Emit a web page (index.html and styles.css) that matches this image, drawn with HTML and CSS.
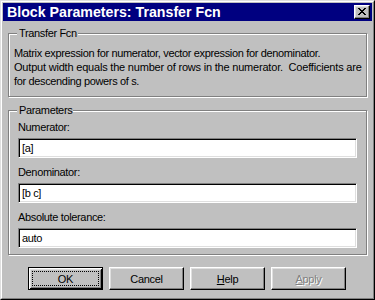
FILE: index.html
```html
<!DOCTYPE html>
<html>
<head>
<meta charset="utf-8">
<link rel="stylesheet" href="styles.css">
</head>
<body>
<div class="window">
  <div class="frame">
    <div class="titlebar">
      <span class="title">Block Parameters: Transfer Fcn</span>
      <button class="close" aria-label="Close">
        <svg width="8" height="7" viewBox="0 0 8 7" shape-rendering="crispEdges">
          <path fill="#000" d="M0 0h2v1H0zM6 0h2v1H6zM1 1h2v1H1zM5 1h2v1H5zM2 2h4v1H2zM3 3h2v1H3zM2 4h4v1H2zM1 5h2v1H1zM5 5h2v1H5zM0 6h2v1H0zM6 6h2v1H6z"/>
        </svg>
      </button>
    </div>
    <div class="body">
      <div class="group desc">
        <span class="legend">Transfer Fcn</span>
        <p class="text">Matrix expression for numerator, vector expression for denominator.
<span class="wide">Output width equals the number of rows in the numerator.  Coefficients are</span>
for descending powers of s.</p>
      </div>
      <div class="group params">
        <span class="legend">Parameters</span>
        <div class="label">Numerator:</div>
        <div class="field">[a]</div>
        <div class="label">Denominator:</div>
        <div class="field">[b c]</div>
        <div class="label">Absolute tolerance:</div>
        <div class="field last">auto</div>
      </div>
    </div>
    <div class="buttons">
      <button class="btn default"><span class="focus">OK</span></button>
      <button class="btn"><span class="cap">Cancel</span></button>
      <button class="btn"><span class="cap"><u>H</u>elp</span></button>
      <button class="btn disabled"><span class="cap"><u>A</u>pply</span></button>
    </div>
  </div>
</div>
</body>
</html>
```

FILE: styles.css
```css
html, body {
  margin: 0;
  padding: 0;
  background: #c0c0c0;
}

body {
  font-family: "Liberation Sans", Arial, sans-serif;
  font-size: 11px;
  letter-spacing: -0.35px;
  color: #000;
}

.window {
  width: 375px;
  height: 300px;
  box-sizing: border-box;
  border: 1px solid;
  border-color: #dfdfdf #000 #000 #dfdfdf;
  background: #c0c0c0;
}

.frame {
  height: 100%;
  box-sizing: border-box;
  border: 1px solid;
  border-color: #fff #808080 #808080 #fff;
  padding: 1px;
  display: flex;
  flex-direction: column;
}

.titlebar {
  height: 18px;
  flex: none;
  background: #000080;
  color: #fff;
  display: flex;
  align-items: flex-start;
  padding: 0 2px 0 4px;
}

.title {
  flex: 1;
  font-weight: bold;
  font-size: 14.2px;
  letter-spacing: 0;
  line-height: 18px;
  white-space: nowrap;
}

.close {
  width: 16px;
  height: 14px;
  margin-top: 2px;
  padding: 0;
  box-sizing: border-box;
  background: #c0c0c0;
  border: 1px solid;
  border-color: #fff #000 #000 #fff;
  box-shadow: inset -1px -1px #808080, inset 1px 1px #dfdfdf;
  display: flex;
  align-items: center;
  justify-content: center;
}

.close svg {
  display: block;
  margin: 0 0 1px 0;
}

.body {
  padding: 0 5px;
  display: flex;
  flex-direction: column;
}

.group {
  position: relative;
  box-sizing: border-box;
  border: 1px solid #808080;
  box-shadow: inset 1px 1px #fff, 1px 1px #fff;
}

.legend {
  position: absolute;
  top: -8px;
  left: 8px;
  padding: 0 1px 0 2px;
  background: #c0c0c0;
  line-height: 14px;
}

.desc {
  margin-top: 12px;
  height: 64px;
  padding: 12px 5px 9px 5px;
}

.text {
  margin: 0;
  line-height: 14px;
  white-space: pre;
}

.text .wide {
  letter-spacing: -0.2px;
}

.params {
  margin-top: 13px;
  padding: 9px 9px 6px 9px;
}

.label {
  line-height: 14px;
  margin-bottom: 4px;
}

.field {
  height: 20px;
  box-sizing: border-box;
  margin-bottom: 7px;
  border: 1px solid;
  border-color: #808080 #fff #fff #808080;
  box-shadow: inset 1px 1px #000, inset -1px -1px #dfdfdf;
  background: #fff;
  padding: 0 3px;
  line-height: 18px;
  white-space: pre;
}

.field.last {
  margin-bottom: 0;
}

.buttons {
  margin-top: 12px;
  display: flex;
  justify-content: center;
  gap: 6px;
  padding-right: 1px;
}

.btn {
  width: 75px;
  height: 23px;
  box-sizing: border-box;
  padding: 0;
  margin: 0;
  background: #c0c0c0;
  border: 1px solid;
  border-color: #fff #000 #000 #fff;
  box-shadow: inset -1px -1px #808080, inset 1px 1px #dfdfdf;
  font-family: inherit;
  font-size: 11px;
  letter-spacing: -0.3px;
  color: #000;
  display: flex;
  align-items: stretch;
}

.btn .cap {
  flex: 1;
  display: flex;
  align-items: center;
  justify-content: center;
}

.btn.default {
  border: 1px solid #000;
  box-shadow: inset 1px 1px #fff, inset -1px -1px #000, inset 2px 2px #dfdfdf, inset -2px -2px #808080;
}

.btn .focus {
  flex: 1;
  margin: 3px;
  border: 1px dotted #000;
  display: flex;
  align-items: center;
  justify-content: center;
}

.btn.disabled {
  color: #808080;
  text-shadow: 1px 1px #fff;
}

.btn u {
  text-decoration: underline;
  text-underline-offset: 1px;
}
```
